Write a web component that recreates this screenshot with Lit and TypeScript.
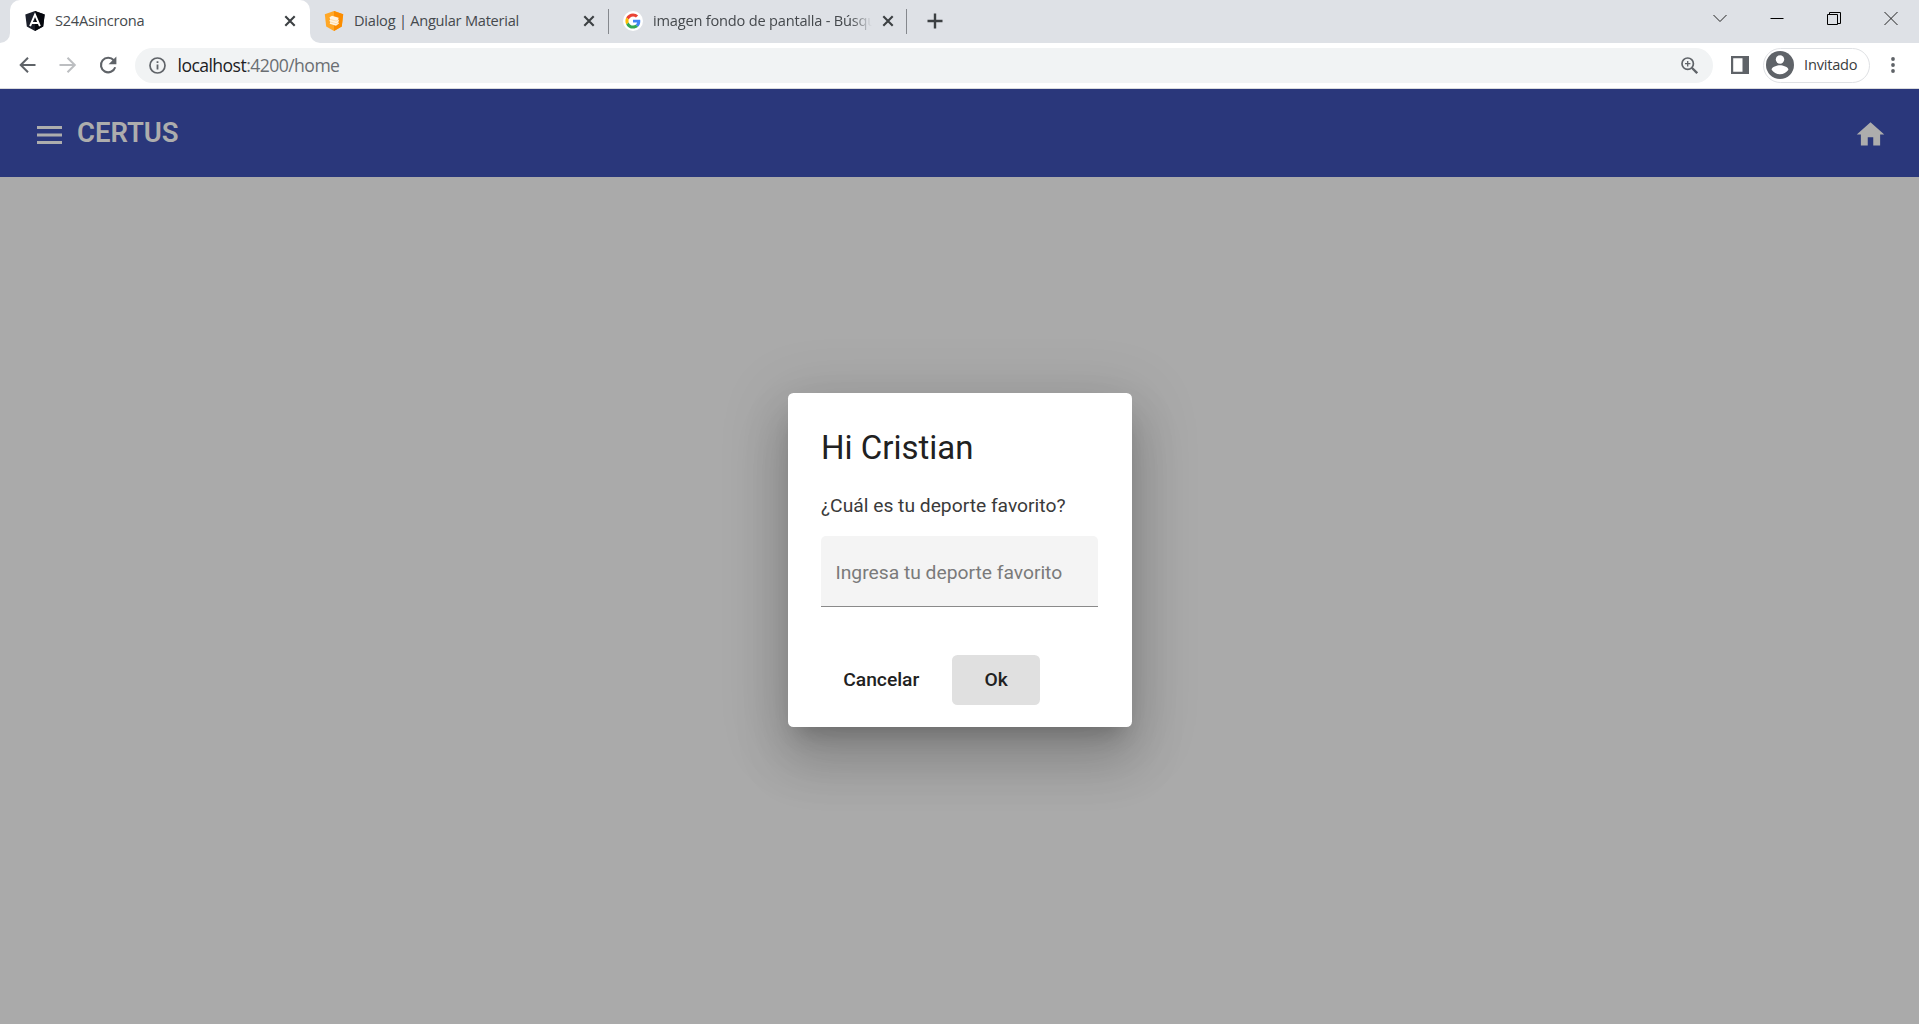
import { LitElement, html, css, svg } from "lit";
import { customElement } from "lit/decorators.js";

const closeIcon = html`<svg class="close" width="12" height="12" viewBox="0 0 12 12">
  <path d="M1.3 1.3l9.4 9.4M10.7 1.3l-9.4 9.4" stroke="#3c4043" stroke-width="2.1" fill="none" />
</svg>`;

@customElement("browser-tabs")
class BrowserTabs extends LitElement {
  static styles = css`
    :host {
      display: flex;
      height: 43px;
      background: #dee1e6;
      color: #45494d;
      font: 14.6px/20px "Open Sans", "Noto Sans", sans-serif;
      overflow: hidden;
    }
    svg { display: block; flex: none; }
    .edge { width: 10px; height: 43px; background: #fff; flex: none; }
    .edge i { display: block; height: 43px; background: #dee1e6; }
    .edge.left i { border-bottom-right-radius: 10px; }
    .edge.right i { border-bottom-left-radius: 10px; }
    .tab { display: flex; align-items: center; box-sizing: border-box; height: 43px; padding-bottom: 1px; flex: none; }
    .active { width: 300px; background: #fff; border-radius: 10px 10px 0 0; padding-left: 15px; padding-right: 14px; }
    .second { width: 288px; padding-left: 4px; padding-right: 13px; }
    .third { width: 297px; padding-left: 14px; padding-right: 12.5px; }
    .label { margin-left: 10px; flex: 1; min-width: 0; white-space: nowrap; padding-bottom: 2px; }
    .one { letter-spacing: -0.25px; }
    .two { letter-spacing: -0.24px; }
    .three {
      letter-spacing: -0.2px; flex: none; width: 222px;
      -webkit-mask-image: linear-gradient(90deg, #000 198px, transparent 219px);
      mask-image: linear-gradient(90deg, #000 198px, transparent 219px);
    }
    .close { margin-left: auto; }
    .sep { width: 1px; height: 25px; background: #85888d; margin-top: 9px; flex: none; }
    .plus { margin: 13px 0 0 20px; }
    .controls { margin-left: auto; display: flex; gap: 43px; padding: 11px 21px 0 0; }
  `;
  render() {
    return html`
      <div class="edge left"><i></i></div>
      <div class="tab active">
        <svg width="20" height="20" viewBox="0 0 20 20">
          <path d="M10 0L19.7 3.4L18.2 15.6L10 20L1.8 15.6L.3 3.4Z" fill="#1b1f2a" />
          <path d="M10 0L19.7 3.4L18.2 15.6L10 20Z" fill="#05070d" />
          <path d="M5.1 15.2L10 3.7L14.9 15.2M6.8 12h6.4" fill="none" stroke="#fff" stroke-width="1.9" />
        </svg>
        <span class="label one">S24Asincrona</span>${closeIcon}
      </div>
      <div class="edge right"><i></i></div>
      <div class="tab second">
        <svg width="20" height="20" viewBox="0 0 20 20">
          <path d="M10 0L19.2 3.3L17.8 15.5L10 20L2.2 15.5L.8 3.3Z" fill="#ffa726" />
          <path d="M10 0L19.2 3.3L17.8 15.5L10 20Z" fill="#fb8c00" />
          <path d="M5.5 6.2L8 4.8L14.6 6.8L14.2 8.8L15 9.6L14.2 11.3L15 12.4L12 14.8L5.7 12.8L6.3 11L5.3 9.8L6.2 8.5Z" fill="#fff3e0" />
          <path d="M6.2 8.4l6 1.7 2-1M6.2 11l6 1.7 2-1" fill="none" stroke="#ffcc80" stroke-width=".6" />
        </svg>
        <span class="label two">Dialog | Angular Material</span>${closeIcon}
      </div>
      <div class="sep"></div>
      <div class="tab third">
        <svg width="20" height="20" viewBox="0 0 20 20">
          <circle cx="10" cy="10" r="10" fill="#fff" />
          <g transform="translate(2.4 2.4) scale(.317)">
            <path fill="#EA4335" d="M24 9.5c3.54 0 6.71 1.22 9.21 3.6l6.85-6.85C35.9 2.38 30.47 0 24 0 14.62 0 6.51 5.38 2.56 13.22l7.98 6.19C12.43 13.72 17.74 9.5 24 9.5z" />
            <path fill="#4285F4" d="M46.98 24.55c0-1.57-.15-3.09-.38-4.55H24v9.02h12.94c-.58 2.96-2.26 5.48-4.78 7.18l7.73 6c4.51-4.18 7.09-10.36 7.09-17.65z" />
            <path fill="#FBBC05" d="M10.53 28.59c-.48-1.45-.76-2.99-.76-4.59s.27-3.14.76-4.59l-7.98-6.19C.92 16.46 0 20.12 0 24c0 3.88.92 7.54 2.56 10.78l7.97-6.19z" />
            <path fill="#34A853" d="M24 48c6.48 0 11.93-2.13 15.89-5.81l-7.73-6c-2.15 1.45-4.92 2.3-8.16 2.3-6.26 0-11.57-4.22-13.47-9.91l-7.98 6.19C6.51 42.62 14.62 48 24 48z" />
          </g>
        </svg>
        <span class="label three">imagen fondo de pantalla - Búsqu</span>${closeIcon}
      </div>
      <div class="sep"></div>
      <svg class="plus" width="16" height="16" viewBox="0 0 16 16">
        <path d="M8 .5v15M.5 8h15" stroke="#3c4043" stroke-width="2.4" />
      </svg>
      <div class="controls">
        <svg width="14" height="14" viewBox="0 0 14 14"><path d="M.5 4l6.5 6.5L13.500 4" fill="none" stroke="#222" /></svg>
        <svg width="14" height="14" viewBox="0 0 14 14"><path d="M.5 7.500h13" stroke="#000" /></svg>
        <svg width="14" height="14" viewBox="0 0 14 14"><path d="M.5 3.500h10v10h-10zM2.500 3.500v-2h11v11h-3" fill="none" stroke="#000" /></svg>
        <svg width="14" height="14" viewBox="0 0 14 14"><path d="M.5 1l13 13M13.500 1l-13 13" fill="none" stroke="#222" /></svg>
      </div>
    `;
  }
}

const kebab = [3, 9, 15].map((y) => svg`<circle cx="3" cy=${y} r="1.9" fill="#5f6368" />`);

@customElement("browser-bar")
class BrowserBar extends LitElement {
  static styles = css`
    :host {
      display: flex; align-items: center; box-sizing: border-box; height: 46px;
      padding: 0 23.5px 1px 17px; background: #fff; border-bottom: 1px solid #d9dadd;
      font-family: "Open Sans", "Noto Sans", sans-serif;
    }
    svg { display: block; flex: none; }
    .nav { display: flex; gap: 18px; padding-right: 16px; }
    .omni {
      display: flex; align-items: center; box-sizing: border-box; width: 1578px; height: 35px;
      border-radius: 18px; background: #f1f3f4; padding: 0 15px 0 14px;
    }
    .url { margin-left: 11.500px; flex: 1; font-size: 17.600px; line-height: 24px; letter-spacing: -0.56px; color: #6a6e72; padding-bottom: 1px; }
    .url b { font-weight: 400; color: #202124; }
    .panel { margin-left: 18px; }
    .profile {
      display: flex; align-items: center; box-sizing: border-box; width: 107px; height: 35px; margin-left: 14px;
      border: 1px solid #dfe1e4; border-radius: 18px; padding-left: 2px; background: #fff;
      font-size: 14.600px; line-height: 20px; letter-spacing: -0.2px; color: #3a3d40;
    }
    .profile span { margin-left: 10px; padding-bottom: 2px; }
    .kebab { margin-left: auto; }
  `;
  render() {
    return html`
      <div class="nav">
        <svg width="22" height="22" viewBox="0 0 22 22"><path d="M18.500 11H4M11 3.700L3.700 11L11 18.300" fill="none" stroke="#5f6368" stroke-width="2" /></svg>
        <svg width="22" height="22" viewBox="0 0 22 22"><path d="M2.500 11H17.500M10.500 3.700L17.800 11L10.500 18.300" fill="none" stroke="#bcbec1" stroke-width="2" /></svg>
        <svg width="22" height="22" viewBox="0 0 22 22">
          <path d="M16.800 6.300A7.300 7.300 0 1 0 18.200 13.300" fill="none" stroke="#5f6368" stroke-width="2.100" />
          <path d="M19.400 2.500v7.800h-7.800z" fill="#5f6368" />
        </svg>
      </div>
      <div class="omni">
        <svg width="17" height="17" viewBox="0 0 17 17">
          <circle cx="8.500" cy="8.500" r="7.500" fill="none" stroke="#5f6368" stroke-width="1.700" />
          <path d="M8.500 7.500v5M8.500 4.200v1.900" stroke="#5f6368" stroke-width="1.800" />
        </svg>
        <span class="url"><b>localhost</b>:4200/home</span>
        <svg width="17" height="17" viewBox="0 0 17 17">
          <circle cx="6.700" cy="6.700" r="5.700" fill="none" stroke="#5f6368" stroke-width="1.700" />
          <path d="M10.800 10.800l5.400 5.400" stroke="#5f6368" stroke-width="2.300" />
          <path d="M6.700 4v5.400M4 6.700h5.400" stroke="#5f6368" stroke-width="1.300" />
        </svg>
      </div>
      <svg class="panel" width="18" height="18" viewBox="0 0 18 18">
        <path d="M0 0h18v18H0zM2.200 2.200v13.600h9.300V2.200z" fill="#5f6368" fill-rule="evenodd" />
      </svg>
      <div class="profile">
        <svg width="28" height="28" viewBox="0 0 28 28">
          <circle cx="14" cy="14" r="14" fill="#5f6368" />
          <circle cx="14" cy="8.500" r="4.200" fill="#fff" />
          <path d="M5.600 18.700c0-3 5.600-4.500 8.400-4.500s8.400 1.500 8.400 4.500c-1.800 2.700-4.900 4.600-8.400 4.600s-6.600-1.900-8.400-4.600z" fill="#fff" />
        </svg>
        <span>Invitado</span>
      </div>
      <svg class="kebab" width="6" height="18" viewBox="0 0 6 18">${kebab}</svg>
    `;
  }
}

@customElement("sport-dialog")
class SportDialog extends LitElement {
  static styles = css`
    :host {
      display: flex; flex-direction: column; box-sizing: border-box; width: 344px; height: 334px;
      padding: 33px 33px 22px; background: #fff; border-radius: 5.500px; color: #212121;
      font-family: Roboto, sans-serif;
      box-shadow: 0 15px 21px -10px rgba(0,0,0,.2), 0 33px 52px 4px rgba(0,0,0,.14), 0 12px 63px 11px rgba(0,0,0,.12);
    }
    .title { margin: 0 0 0 .5px; height: 44px; font-size: 33px; line-height: 44px; font-weight: 400; }
    .question { margin: 22px 0 0 .5px; font-size: 19.250px; line-height: 28px; color: #3a3a3a; white-space: nowrap; }
    .field {
      display: flex; align-items: center; box-sizing: border-box; width: 277px; height: 71px; margin-top: 16px;
      padding: 2px 15px 0; background: #f4f4f4; border-radius: 5px 5px 0 0; border-bottom: 1px solid #8a8a8a;
      font-size: 19.250px; color: #7a7a7a; white-space: nowrap;
    }
    .actions { display: flex; margin-top: auto; }
    .btn {
      height: 50px; padding: 0 0 0 1.500px; display: flex; align-items: center; justify-content: center;
      font: 500 19.250px/50px Roboto, sans-serif; border: 0; background: none; color: #212121; border-radius: 5.500px;
      box-sizing: border-box;
    }
    .cancel { width: 120px; }
    .ok { width: 88px; margin-left: 11px; background: #e0e0e0; }
  `;
  render() {
    return html`
      <h1 class="title">Hi Cristian</h1>
      <p class="question">¿Cuál es tu deporte favorito?</p>
      <div class="field">Ingresa tu deporte favorito</div>
      <div class="actions">
        <button class="btn cancel">Cancelar</button>
        <button class="btn ok">Ok</button>
      </div>
    `;
  }
}

@customElement("app-root")
class AppRoot extends LitElement {
  static styles = css`
    :host { display: flex; flex-direction: column; height: 1024px; overflow: hidden; background: #aaa; }
    .toolbar {
      display: flex; align-items: center; box-sizing: border-box; height: 88px; flex: none;
      padding: 0 32px 0 33px; background: #2a377b; color: #adadad; font-family: Roboto, sans-serif;
    }
    .toolbar svg { display: block; flex: none; }
    .menu { margin: 3px 0 0 4px; }
    .brand { margin-left: 15px; font-size: 27.500px; line-height: 44px; font-weight: 600; letter-spacing: -.05px; }
    .home { margin: 2px 0 0 auto; }
    .page { flex: 1; display: flex; justify-content: center; align-items: flex-start; padding-top: 216px; }
  `;
  render() {
    return html`
      <browser-tabs></browser-tabs>
      <browser-bar></browser-bar>
      <div class="toolbar">
        <svg class="menu" width="25" height="18" viewBox="0 0 25 18">
          <path d="M0 1.500h25M0 9h25M0 16.500h25" stroke="#adadad" stroke-width="3" />
        </svg>
        <span class="brand">CERTUS</span>
        <svg class="home" width="33" height="33" viewBox="0 0 24 24">
          <path d="M10 20v-6h4v6h5v-8h3L12 3 2 12h3v8z" fill="#adadad" />
        </svg>
      </div>
      <div class="page"><sport-dialog></sport-dialog></div>
    `;
  }
}
